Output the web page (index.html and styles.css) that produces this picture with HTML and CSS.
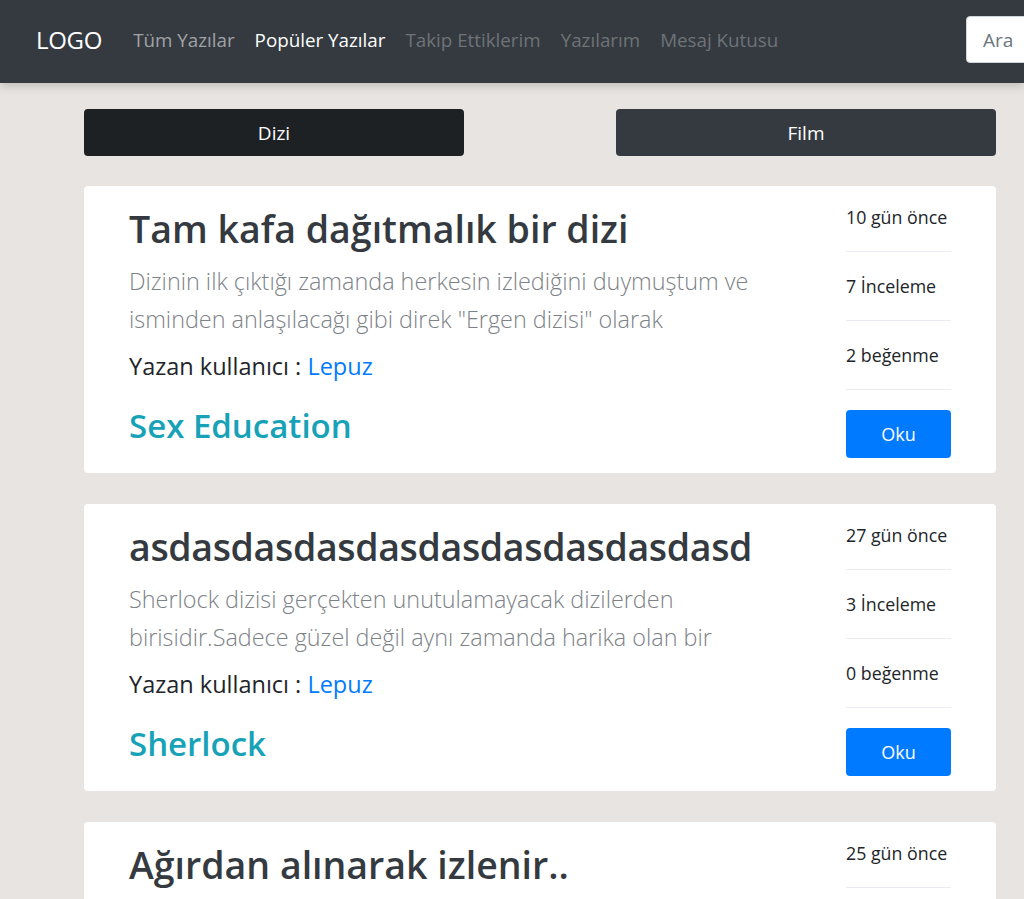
FILE: index.html
```html
<!DOCTYPE html>
<html lang="tr">
<head>
<meta charset="utf-8">
<title>Yazılar</title>
<link rel="stylesheet" href="styles.css">
</head>
<body>
<nav class="navbar">
  <a class="brand" href="#">LOGO</a>
  <ul class="nav">
    <li><a class="nav-link dim" href="#">Tüm Yazılar</a></li>
    <li><a class="nav-link active" href="#">Popüler Yazılar</a></li>
    <li><a class="nav-link muted" href="#">Takip Ettiklerim</a></li>
    <li><a class="nav-link muted" href="#">Yazılarım</a></li>
    <li><a class="nav-link muted" href="#">Mesaj Kutusu</a></li>
  </ul>
  <input class="search" type="text" placeholder="Ara">
</nav>

<main class="main">
  <div class="tabs">
    <button class="tab tab-active">Dizi</button>
    <button class="tab">Film</button>
  </div>

  <article class="card">
    <div class="card-body">
      <h1 class="title">Tam kafa dağıtmalık bir dizi</h1>
      <p class="desc">Dizinin ilk çıktığı zamanda herkesin izlediğini duymuştum ve<br>isminden anlaşılacağı gibi direk "Ergen dizisi" olarak</p>
      <p class="author">Yazan kullanıcı : <a href="#">Lepuz</a></p>
      <h2 class="show">Sex Education</h2>
    </div>
    <aside class="stats">
      <div class="stat">10 gün önce</div>
      <div class="stat">7 İnceleme</div>
      <div class="stat">2 beğenme</div>
      <button class="read">Oku</button>
    </aside>
  </article>

  <article class="card">
    <div class="card-body">
      <h1 class="title title-tight">asdasdasdasdasdasdasdasdasdasd</h1>
      <p class="desc">Sherlock dizisi gerçekten unutulamayacak dizilerden<br>birisidir.Sadece güzel değil aynı zamanda harika olan bir</p>
      <p class="author">Yazan kullanıcı : <a href="#">Lepuz</a></p>
      <h2 class="show">Sherlock</h2>
    </div>
    <aside class="stats">
      <div class="stat">27 gün önce</div>
      <div class="stat">3 İnceleme</div>
      <div class="stat">0 beğenme</div>
      <button class="read">Oku</button>
    </aside>
  </article>

  <article class="card">
    <div class="card-body">
      <h1 class="title">Ağırdan alınarak izlenir..</h1>
      <p class="desc">Yavaş ilerleyen ama sonunda insanı içine çeken<br>bir yapım olarak akılda kalıyor</p>
      <p class="author">Yazan kullanıcı : <a href="#">Lepuz</a></p>
      <h2 class="show">Dark</h2>
    </div>
    <aside class="stats">
      <div class="stat">25 gün önce</div>
      <div class="stat">5 İnceleme</div>
      <div class="stat">1 beğenme</div>
      <button class="read">Oku</button>
    </aside>
  </article>
</main>
</body>
</html>
```

FILE: styles.css
```css
* { box-sizing: border-box; }

html, body {
  margin: 0;
  padding: 0;
  overflow: hidden;
}

body {
  background: #e8e4e1;
  font-family: "Open Sans", "Noto Sans", sans-serif;
  color: #212529;
}

.navbar {
  position: relative;
  z-index: 2;
  display: flex;
  align-items: center;
  height: 83px;
  padding-left: 36px;
  padding-bottom: 4px;
  background: #343a40;
  box-shadow: 0 3px 9px rgba(0, 0, 0, 0.18);
}

.brand {
  color: #fff;
  font-size: 24px;
  text-decoration: none;
  margin-right: 21px;
  letter-spacing: -0.3px;
}

.nav {
  display: flex;
  list-style: none;
  margin: 0;
  padding: 0;
  flex: 1;
}

.nav-link {
  display: block;
  padding: 8px 10px;
  font-size: 18.8px;
  text-decoration: none;
}

.nav-link.dim { color: #a1a3a6; }
.nav-link.active { color: #fff; }
.nav-link.muted { color: #6f7377; }

.search {
  flex-shrink: 0;
  width: 200px;
  height: 47px;
  margin-right: -142px;
  border: 1px solid #ced4da;
  border-radius: 4px;
  padding: 0 16px;
  font-family: inherit;
  font-size: 19px;
  color: #495057;
  background: #fff;
}

.search::placeholder { color: #6c757d; }

.main {
  padding: 26px 28px 0 84px;
}

.tabs {
  display: flex;
  justify-content: space-between;
  margin-bottom: 30px;
}

.tab {
  width: 380px;
  height: 47px;
  border: 0;
  border-radius: 4px;
  background: #343a40;
  color: #fff;
  font-family: inherit;
  font-size: 19px;
}

.tab-active { background: #1d2124; }

.card {
  display: flex;
  background: #fff;
  border-radius: 4px;
  padding: 19px 45px 15px 45px;
  margin-bottom: 31px;
}

.card-body {
  flex: 1;
  min-width: 0;
}

.title {
  margin: 2px 0 0;
  font-size: 37.5px;
  line-height: 44px;
  font-weight: 600;
  color: #343a40;
  white-space: nowrap;
}

.title-tight { letter-spacing: -0.35px; }

.desc {
  margin: 11px 0 0;
  font-size: 23.4px;
  line-height: 38px;
  font-weight: 300;
  color: #7d8287;
  white-space: nowrap;
}

.author {
  margin: 13px 0 0;
  font-size: 23.5px;
  line-height: 30px;
  color: #212529;
}

.author a {
  color: #007bff;
  text-decoration: none;
}

.show {
  margin: 25px 0 0;
  font-size: 33px;
  line-height: 40px;
  font-weight: 600;
  color: #17a2b8;
}

.stats {
  width: 105px;
  flex-shrink: 0;
  display: flex;
  flex-direction: column;
}

.stat {
  padding: 22px 0;
  font-size: 17.8px;
  line-height: 24px;
  border-bottom: 1px solid #ebebf3;
  white-space: nowrap;
}

.stat:first-child { padding-top: 0; }

.read {
  margin-top: 20px;
  height: 48px;
  border: 0;
  border-radius: 4px;
  background: #007bff;
  color: #fff;
  font-family: inherit;
  font-size: 18px;
}
```
